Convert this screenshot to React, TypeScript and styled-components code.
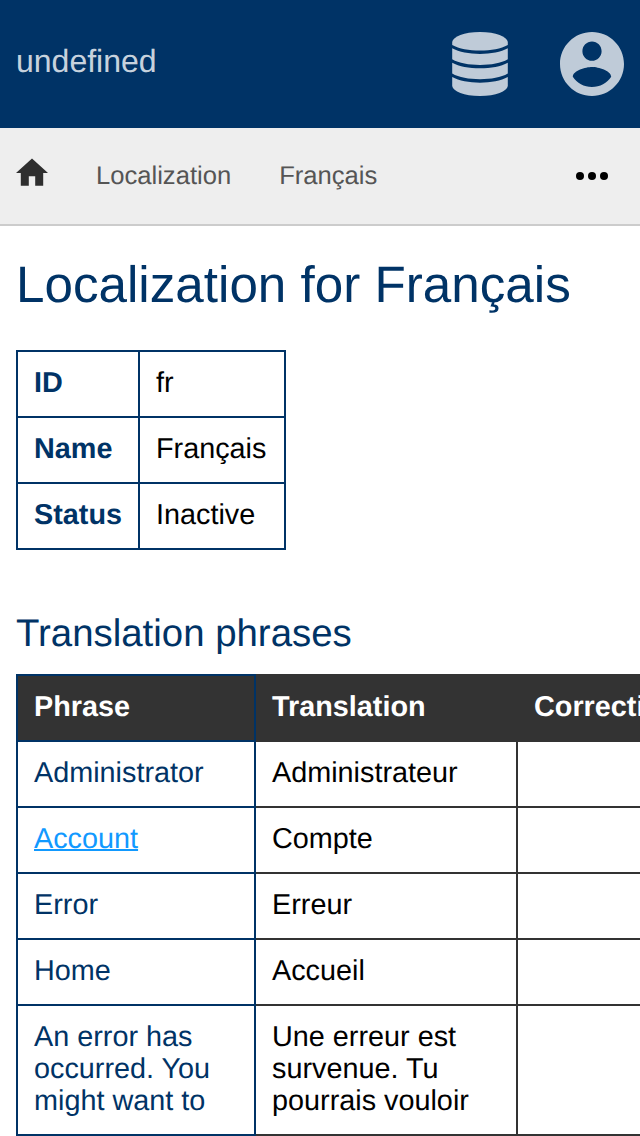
import React from "react";
import styled, { createGlobalStyle } from "styled-components";

const navy = "#003366";
const dark = "#333333";

const GlobalStyle = createGlobalStyle`
  * { box-sizing: border-box; }
  html, body { margin: 0; padding: 0; overflow: hidden; background: #fff; }
  body {
    font-family: "Liberation Sans", Arial, sans-serif;
    font-size: 28.8px;
    line-height: 32px;
    color: #000;
    text-rendering: geometricPrecision;
  }
`;

const Page = styled.div`
  width: 100%;
  height: 1136px;
  overflow: hidden;
`;

const Header = styled.header`
  display: flex;
  align-items: center;
  justify-content: space-between;
  height: 128px;
  padding: 0 16px;
  background: ${navy};
`;

const Brand = styled.span`
  font-size: 32px;
  line-height: 36px;
  padding-bottom: 6px;
  color: rgba(255, 255, 255, 0.8);
`;

const HeaderActions = styled.div`
  display: flex;
  gap: 48px;
  color: rgba(255, 255, 255, 0.75);
`;

const HeaderIcon = styled.svg`
  display: block;
  width: 64px;
  height: 64px;
  fill: currentColor;
`;

const Nav = styled.nav`
  display: flex;
  align-items: center;
  gap: 48px;
  height: 98px;
  padding: 0 32px 0 16px;
  background: #eeeeee;
  border-bottom: 2px solid #cccccc;
  color: #555555;
  font-size: 25.6px;
`;

const HomeIcon = styled.svg`
  display: block;
  width: 32px;
  height: 32px;
  margin-bottom: 6px;
  fill: #2e2e2e;
`;

const Crumb = styled.span`
  line-height: 32px;
`;

const MoreIcon = styled.svg`
  display: block;
  width: 32px;
  height: 8px;
  margin-left: auto;
  fill: #000;
`;

const Main = styled.main`
  padding: 0 16px;
`;

const Title = styled.h1`
  margin: 29px 0 35px;
  font-size: 51.2px;
  font-weight: 400;
  line-height: 60px;
  color: ${navy};
`;

const Subtitle = styled.h2`
  margin: 61px 0 17px;
  font-size: 38.4px;
  font-weight: 400;
  line-height: 46px;
  color: ${navy};
`;

const Grid = styled.div<{ $columns: string }>`
  display: grid;
  grid-template-columns: ${(p) => p.$columns};
  width: max-content;
`;

const Cell = styled.div<{ $line: string; $start?: boolean; $top?: boolean }>`
  min-height: ${(p) => (p.$top ? 68 : 66)}px;
  padding: 15px 16px 17px;
  border: solid ${(p) => p.$line};
  border-width: ${(p) => (p.$top ? 2 : 0)}px 2px 2px ${(p) => (p.$start ? 2 : 0)}px;
`;

const LabelCell = styled(Cell)`
  font-weight: 700;
  color: ${navy};
`;

const HeadCell = styled(Cell)`
  font-weight: 700;
  background: ${dark};
  color: #fff;
`;

const PhraseCell = styled(Cell)`
  color: ${navy};
`;

const PhraseLink = styled.a`
  color: #1199ff;
  text-decoration: underline;
  text-decoration-thickness: 2px;
`;

const details = [
  ["ID", "fr"],
  ["Name", "Français"],
  ["Status", "Inactive"],
];

const phrases = [
  { phrase: "Administrator", translation: "Administrateur" },
  { phrase: "Account", translation: "Compte", link: true },
  { phrase: "Error", translation: "Erreur" },
  { phrase: "Home", translation: "Accueil" },
  {
    phrase: "An error has occurred. You might want to",
    translation: "Une erreur est survenue. Tu pourrais vouloir",
  },
];

export default function App() {
  return (
    <Page>
      <GlobalStyle />
      <Header>
        <Brand>undefined</Brand>
        <HeaderActions>
          <HeaderIcon viewBox="0 0 64 64">
            <path d="M4.200 10C5 4.600 16 0 32 0s27 4.600 27.800 10v3C53 16.800 43 18.600 32 18.600S11 16.800 4.200 13z" />
            <path d="M4.200 16.300C11 20 21 21.900 32 21.900S53 20 59.800 16.300V27.200C53 31.200 43 32.900 32 32.900S11 31.200 4.200 27.200z" />
            <path d="M4.200 30.700C11 34.400 21 36.300 32 36.300S53 34.400 59.800 30.700V41.600C53 45.600 43 47.300 32 47.300S11 45.600 4.200 41.600z" />
            <path d="M4.200 45.100C11 48.800 21 50.700 32 50.700S53 48.800 59.800 45.100V54C59 59.400 48 64 32 64S5 59.400 4.200 54z" />
          </HeaderIcon>
          <HeaderIcon viewBox="2 2 20 20">
            <path d="M12 2C6.480 2 2 6.480 2 12s4.480 10 10 10 10-4.480 10-10S17.520 2 12 2zm0 3c1.660 0 3 1.340 3 3s-1.340 3-3 3-3-1.340-3-3 1.340-3 3-3zm0 14.200c-2.500 0-4.710-1.280-6-3.220.03-1.990 4-3.080 6-3.080 1.990 0 5.970 1.090 6 3.080-1.290 1.940-3.500 3.220-6 3.220z" />
          </HeaderIcon>
        </HeaderActions>
      </Header>
      <Nav>
        <HomeIcon viewBox="2 2 20 20">
          <path d="M10 20v-6h4v6h5v-8h3L12 3 2 12h3v8z" />
        </HomeIcon>
        <Crumb>Localization</Crumb>
        <Crumb>Français</Crumb>
        <MoreIcon viewBox="0 0 32 8">
          <circle cx="4" cy="4" r="4" />
          <circle cx="16" cy="4" r="4" />
          <circle cx="28" cy="4" r="4" />
        </MoreIcon>
      </Nav>
      <Main>
        <Title>Localization for Français</Title>
        <Grid $columns="124px 146px">
          {details.map(([label, value], i) => (
            <React.Fragment key={label}>
              <LabelCell $line={navy} $start $top={i === 0}>{label}</LabelCell>
              <Cell $line={navy} $top={i === 0}>{value}</Cell>
            </React.Fragment>
          ))}
        </Grid>
        <Subtitle>Translation phrases</Subtitle>
        <Grid $columns="240px 262px 180px">
          <HeadCell $line={navy} $start $top>Phrase</HeadCell>
          <HeadCell $line={dark} $top>Translation</HeadCell>
          <HeadCell $line={dark} $top>Correction</HeadCell>
          {phrases.map((p) => (
            <React.Fragment key={p.phrase}>
              <PhraseCell $line={navy} $start>
                {p.link ? <PhraseLink>{p.phrase}</PhraseLink> : p.phrase}
              </PhraseCell>
              <Cell $line={dark}>{p.translation}</Cell>
              <Cell $line={dark} />
            </React.Fragment>
          ))}
        </Grid>
      </Main>
    </Page>
  );
}
